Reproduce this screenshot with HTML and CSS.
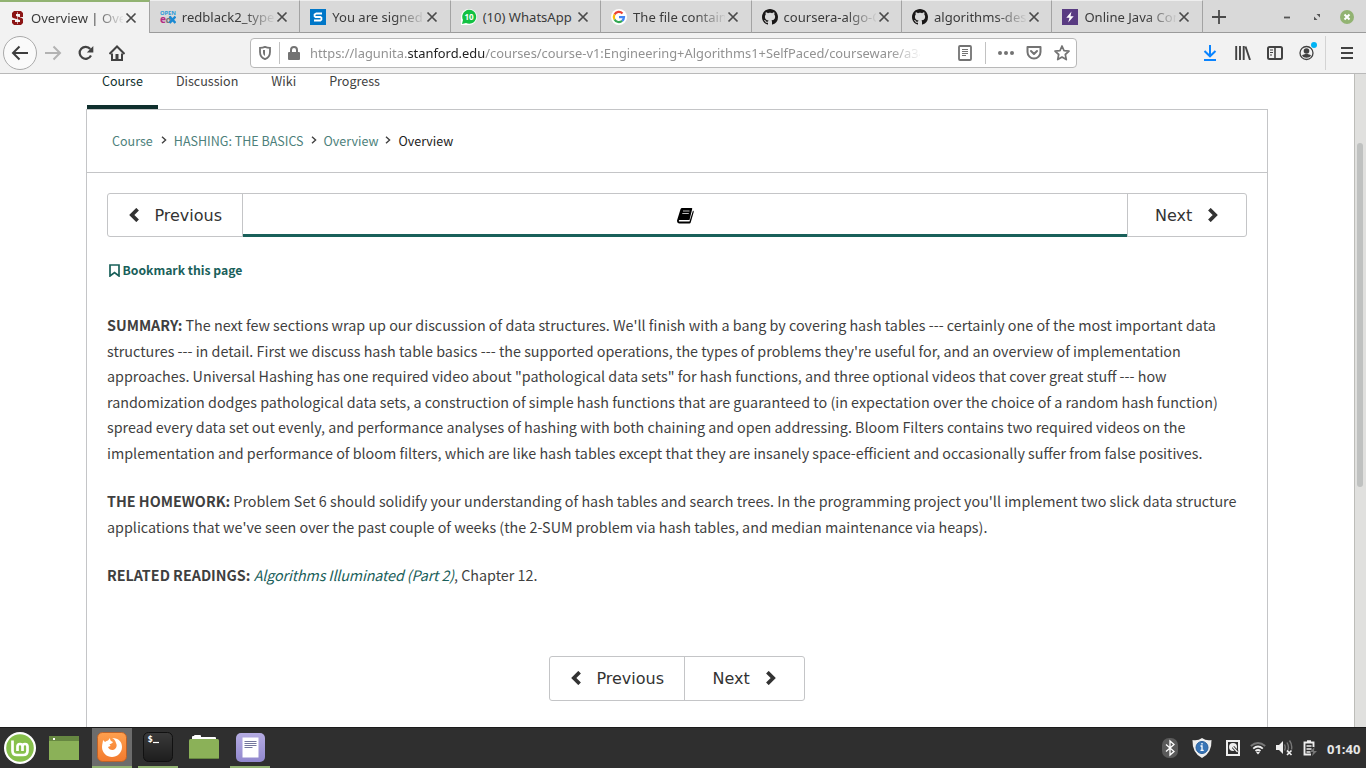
FILE: index.html
```
<!DOCTYPE html>
<html lang="en">
<head>
<meta charset="utf-8">
<title>Overview | Overview</title>
<link rel="stylesheet" href="styles.css">
</head>
<body>
<svg class="defs" width="0" height="0">
  <defs>
    <symbol id="close" viewBox="0 0 12 12"><path d="M1.5 1.5l9 9M10.5 1.5l-9 9" stroke="#4a4a4a" stroke-width="1.7" fill="none"/></symbol>
    <symbol id="github" viewBox="0 0 16 16"><path fill="#191717" d="M8 0C3.58 0 0 3.58 0 8c0 3.54 2.29 6.53 5.47 7.59.4.07.55-.17.55-.38 0-.19-.01-.82-.01-1.49-2.01.37-2.53-.49-2.69-.94-.09-.23-.48-.94-.82-1.13-.28-.15-.68-.52-.01-.53.63-.01 1.08.58 1.23.82.72 1.21 1.87.87 2.33.66.07-.52.28-.87.51-1.07-1.78-.2-3.64-.89-3.64-3.95 0-.87.31-1.59.82-2.15-.08-.2-.36-1.02.08-2.12 0 0 .67-.21 2.2.82.64-.18 1.32-.27 2-.27s1.36.09 2 .27c1.53-1.04 2.2-.82 2.2-.82.44 1.1.16 1.92.08 2.12.51.56.82 1.27.82 2.15 0 3.07-1.87 3.75-3.65 3.95.29.25.54.73.54 1.48 0 1.07-.01 1.93-.01 2.2 0 .21.15.46.55.38A8.01 8.01 0 0 0 16 8c0-4.42-3.58-8-8-8z"/></symbol>
    <symbol id="chev-left" viewBox="0 0 12 14"><path d="M9.600 1.200L3.800 7l5.800 5.800" stroke="#333" stroke-width="3.700" fill="none"/></symbol>
    <symbol id="chev-right" viewBox="0 0 12 14"><path d="M2.400 1.200L8.200 7l-5.800 5.800" stroke="#333" stroke-width="3.700" fill="none"/></symbol>
    <symbol id="crumb" viewBox="0 0 6 8"><path d="M1 .7L4.6 4 1 7.3" stroke="#414141" stroke-width="1.4" fill="none"/></symbol>
  </defs>
</svg>

<div class="screen">
  <header class="tabstrip">
    <div class="tab active">
      <svg class="fav" viewBox="0 0 16 16"><path fill="#8c1515" d="M5 1h7l2 2v4h-3V4H7v2l6 2 1 1v4l-2 2H5l-2-2v-3h3v2h5v-2L4 8 3 7V3z"/><path fill="#fff" d="M8 2h1v12H8z" opacity=".55"/></svg>
      <span class="label">Overview | Overview</span><svg class="x"><use href="#close"/></svg>
    </div>
    <div class="tab">
      <svg class="fav" viewBox="0 0 16 16"><text x="0" y="5.6" font-size="6" font-weight="bold" fill="#2e9bd8" textLength="16" lengthAdjust="spacingAndGlyphs">OPEN</text><text x="0" y="14.3" font-size="10" font-weight="bold" fill="#b52a83">e<tspan font-size="9.5" fill="#777" dx="-.6">d</tspan></text><path d="M9.500 7.500l6 6.500m0-6.500l-6 6.500" stroke="#1b8ad3" stroke-width="2.500"/></svg>
      <span class="label">redblack2_types</span><svg class="x"><use href="#close"/></svg>
    </div>
    <div class="tab">
      <svg class="fav" viewBox="0 0 16 16"><path fill="#0077c8" d="M0 0h16v16H0z"/><path d="M12 4.500H6.300L4.600 5.500v1.700l1 .8h4.800l1 .8v1.700l-1.100 1H4" stroke="#fff" stroke-width="1.800" fill="none"/></svg>
      <span class="label">You are signed in</span><svg class="x"><use href="#close"/></svg>
    </div>
    <div class="tab">
      <svg class="fav" viewBox="0 0 16 16"><path fill="#fff" d="M0 16V8a8 8 0 1 1 8 8z"/><path fill="#13c143" d="M1 15l1-4a7 7 0 1 1 3 3z"/><text x="8" y="10.800" font-size="8" font-weight="bold" fill="#fff" text-anchor="middle">10</text></svg>
      <span class="label full">(10) WhatsApp</span><svg class="x"><use href="#close"/></svg>
    </div>
    <div class="tab">
      <svg class="fav" viewBox="0 0 16 16"><circle cx="8" cy="8" r="8" fill="#fff"/><g fill="none" stroke-width="2.200"><path stroke="#ea4335" d="M3.500 5.500a5 5 0 0 1 8-1.100"/><path stroke="#fbbc05" d="M3.500 5.500a5 5 0 0 0 0 5"/><path stroke="#34a853" d="M3.500 10.500a5 5 0 0 0 7.700 1.300"/><path stroke="#4285f4" d="M11.200 11.800A5 5 0 0 0 13 8.100H8"/></g></svg>
      <span class="label">The file contains</span><svg class="x"><use href="#close"/></svg>
    </div>
    <div class="tab">
      <svg class="fav"><use href="#github"/></svg>
      <span class="label">coursera-algo-Co</span><svg class="x"><use href="#close"/></svg>
    </div>
    <div class="tab">
      <svg class="fav"><use href="#github"/></svg>
      <span class="label">algorithms-design</span><svg class="x"><use href="#close"/></svg>
    </div>
    <div class="tab">
      <svg class="fav" viewBox="0 0 16 16"><path fill="#593b82" d="M0 0h16v16H0z"/><path fill="#fff" d="M9.500 2.500L4.300 8.700h3.200L6.200 13.500l5.500-6.300H8.500z"/></svg>
      <span class="label">Online Java Comp</span><svg class="x"><use href="#close"/></svg>
    </div>
    <svg class="plus" viewBox="0 0 14 14"><path d="M7 0v14M0 7h14" stroke="#4a4a4a" stroke-width="1.800"/></svg>
    <div class="winctl">
      <svg width="8" height="8"><path d="M1 4.500h6" stroke="#555" stroke-width="1.800"/></svg>
      <svg width="8" height="8"><path d="M3.500 1H7v3.500zM1 3.500V7h3.500z" fill="#555"/></svg>
      <svg width="14" height="14"><circle cx="7" cy="7" r="7" fill="#92b372"/><path d="M4.500 4.500l5 5m0-5l-5 5" stroke="#fff" stroke-width="2"/></svg>
    </div>
  </header>

  <div class="toolbar">
    <span class="back"><svg width="18" height="16" fill="none" stroke="#3d3d3d" stroke-width="2"><path d="M17 8H2M8.500 1.500L2 8l6.500 6.500"/></svg></span>
    <svg class="fwd" width="17" height="16" fill="none" stroke="#b3b3b3" stroke-width="2"><path d="M0 8h15M8.500 1.500L15 8l-6.500 6.500"/></svg>
    <svg class="reload" width="16" height="16" fill="none"><path d="M13 10.500A6 6 0 1 1 12.300 4" stroke="#424242" stroke-width="2.200"/><path d="M15.300 1v6.500H8.800z" fill="#424242"/></svg>
    <svg class="home" width="16" height="16"><path d="M.5 9L8 1.500 15.500 9" fill="none" stroke="#424242" stroke-width="2"/><path d="M3 8.500V15h10V8.500" fill="none" stroke="#424242" stroke-width="2"/><path d="M6.500 9h3v6h-3z" fill="#424242"/></svg>
    <div class="urlbar">
      <svg class="shield" width="12" height="14" fill="none" stroke="#737373"><path d="M6 .9c2 .9 3.500 1 5 1v4c0 3.800-2 6-5 7.200C3 11.900 1 9.700 1 5.900v-4c1.500 0 3-.1 5-1z" stroke-width="1.800"/><path d="M6 4v6C4.500 9 4 8 4 6V4z" fill="#737373" stroke="none"/></svg>
      <i class="sep"></i>
      <svg class="lock" width="12" height="14"><path d="M3 7V4a3 3 0 0 1 6 0v3" fill="none" stroke="#737373" stroke-width="2"/><rect y="6" width="12" height="8" rx="1" fill="#737373"/></svg>
      <span class="url">https://lagunita.<b>stanford.edu</b>/courses/course-v1:Engineering+Algorithms1+SelfPaced/courseware/a34</span>
      <svg class="reader" width="14" height="16" fill="none" stroke="#737373"><rect x="1" y="1" width="12" height="14" rx="1" stroke-width="1.800"/><path d="M4 4.500h6M4 6.500h6M4 8.500h6M4 10.500h4"/></svg>
      <i class="sep tall"></i>
      <svg class="dots" width="16" height="4" fill="#737373"><circle cx="2" cy="2" r="2"/><circle cx="8" cy="2" r="2"/><circle cx="14" cy="2" r="2"/></svg>
      <svg class="pocket" width="16" height="14" fill="none" stroke="#737373" stroke-width="2" stroke-linecap="round" stroke-linejoin="round"><path d="M1.500 1h13v5a6.500 6.500 0 0 1-13 0z"/><path d="M5 5l3 3 3-3"/></svg>
      <svg class="star" width="16" height="16" fill="none" stroke="#737373" stroke-width="1.700" stroke-linejoin="round"><path d="M8 1l2 4.600 5 .5-3.700 3.400 1 5.100L8 12l-4.300 2.600 1-5.100L1 6.100l5-.5z"/></svg>
    </div>
    <div class="tools">
      <svg width="14" height="16" fill="none" stroke="#0a84ff" stroke-width="2"><path d="M7 0v11M1.500 6L7 11.300 12.500 6M1 15h12"/></svg>
      <svg width="16" height="14" stroke="#424242" stroke-width="1.900"><path d="M1.200 0v14M5 0v14M8.700 0v14M10.500.5L15 14"/></svg>
      <svg width="16" height="14" fill="none" stroke="#424242"><rect x="1" y="1" width="14" height="12" rx="1.500" stroke-width="2"/><path d="M8 1v12" stroke-width="1.600"/><path d="M3 4h3M3 6.500h3M3 9h2"/></svg>
      <svg width="18" height="20"><circle cx="7.500" cy="11" r="6.500" fill="none" stroke="#424242" stroke-width="1.300"/><circle cx="7.500" cy="9" r="2.800" fill="#424242"/><path d="M3 13.500c2-2 7-2 9 0-1.500 3-7.500 3-9 0z" fill="#424242"/><circle cx="15" cy="3" r="3" fill="#00b3f4"/></svg>
    </div>
    <svg class="menu" width="12" height="12" stroke="#424242" stroke-width="2"><path d="M0 1h12M0 6h12M0 11h12"/></svg>
  </div>

  <div class="viewport">
    <main>
      <nav class="coursetabs"><a class="on"><span>Course</span></a><a><span>Discussion</span></a><a><span>Wiki</span></a><a><span>Progress</span></a></nav>
      <section class="content">
        <div class="crumbs"><a>Course</a><svg><use href="#crumb"/></svg><a>HASHING: THE BASICS</a><svg><use href="#crumb"/></svg><a>Overview</a><svg><use href="#crumb"/></svg><span>Overview</span></div>
        <div class="seq">
          <div class="btn prev"><svg><use href="#chev-left"/></svg>Previous</div>
          <div class="current"><svg width="17" height="16" viewBox="0 0 17 16"><path d="M5 0h9.500q1 0 .7 1L12.500 12H2.300q-.8.500-.3 1.500h10.500L16 2.500q1 .5.700 1.500l-3 10.500q-.3 1-1.200 1H2.500Q0 15.500 0 12.500L3.500 1.200Q4 0 5 0z"/><path d="M6 3h6.500M5.300 5.500h6.500" stroke="#bbb" stroke-width="1.200"/></svg></div>
          <div class="btn next">Next<svg><use href="#chev-right"/></svg></div>
        </div>
        <div class="bookmark"><svg width="11" height="13"><path d="M1 1h9v11L5.500 8.500 1 12z" fill="none" stroke="#19605a" stroke-width="1.700"/></svg><span>Bookmark this page</span></div>
        <article>
          <p><span><b>SUMMARY:</b> The next few sections wrap up our discussion of data structures. We'll finish with a bang by covering hash tables --- certainly one of the most important data</span>
          <span>structures --- in detail. First we discuss hash table basics --- the supported operations, the types of problems they're useful for, and an overview of implementation</span>
          <span>approaches. Universal Hashing has one required video about "pathological data sets" for hash functions, and three optional videos that cover great stuff --- how</span>
          <span>randomization dodges pathological data sets, a construction of simple hash functions that are guaranteed to (in expectation over the choice of a random hash function)</span>
          <span>spread every data set out evenly, and performance analyses of hashing with both chaining and open addressing. Bloom Filters contains two required videos on the</span>
          <span>implementation and performance of bloom filters, which are like hash tables except that they are insanely space-efficient and occasionally suffer from false positives.</span></p>
          <p><span><b>THE HOMEWORK:</b> Problem Set 6 should solidify your understanding of hash tables and search trees. In the programming project you'll implement two slick data structure</span>
          <span>applications that we've seen over the past couple of weeks (the 2-SUM problem via hash tables, and median maintenance via heaps).</span></p>
          <p><span><b>RELATED READINGS:</b> <em>Algorithms Illuminated (Part 2)</em>, Chapter 12.</span></p>
        </article>
        <div class="seq bottom">
          <div class="btn prev"><svg><use href="#chev-left"/></svg>Previous</div>
          <div class="btn next">Next<svg><use href="#chev-right"/></svg></div>
        </div>
      </section>
    </main>
    <div class="scroll"><div class="thumb"></div></div>
  </div>

  <footer class="panel">
    <svg class="mint" width="32" height="32"><circle cx="16" cy="16" r="16" fill="#fff"/><circle cx="16" cy="16" r="13.800" fill="#87c04c"/><path d="M8.500 8.500v10.200q0 4.300 4.300 4.300h6.400q4.300 0 4.300-4.300v-4.200q0-2.500-2.500-2.500t-2.500 2.500v4.500M18.500 14.500q0-2.500-2.500-2.500t-2.500 2.500v4.500" fill="none" stroke="#fff" stroke-width="2.700"/></svg>
    <svg class="desk" width="30" height="24"><path fill="#8bb158" d="M0 0h30v24H0z"/><path fill="#668741" d="M0 0h30v5H0z"/><path fill="#fff" d="M4 2h2v2H4z"/></svg>
    <div class="task focus"><svg width="30" height="30"><defs><linearGradient id="fx" x2="0" y2="1"><stop stop-color="#ffa04e"/><stop offset="1" stop-color="#f37a2e"/></linearGradient></defs><rect x=".5" y=".5" width="29" height="29" rx="5" fill="url(#fx)" stroke="#bd6228"/><path fill="#fff" d="M6 8l2 2c1-1 2-1.500 3-1.500L13 6c0 2 .5 3 3 4-1 1.500-2 2-3.500 2l1 2-2.500 1c1 3 5 4 7 2 2-2 2-4 1-6-1-3-2-4-4-5 7 0 10 4 10 9 0 6-5 10-10 10S5 21 5 15c0-3 1-5 1-7z"/></svg></div>
    <div class="task run"><svg width="30" height="30"><defs><linearGradient id="tm" x2="0" y2="1"><stop stop-color="#3a3a3a"/><stop offset="1" stop-color="#1d1d1d"/></linearGradient></defs><rect x=".5" y=".5" width="29" height="29" rx="5" fill="url(#tm)" stroke="#111"/><text x="4.500" y="10" class="mono">$</text><path d="M10 10.500h6" stroke="#fff" stroke-width="1.200"/></svg></div>
    <div class="task"><svg width="30" height="26"><path fill="#fff" d="M3 6V3q0-1 1-1h1q0-1 1-1h5q1 0 1 1v1h14q1 0 1 1v2z"/><rect y="5" width="30" height="20" rx="1.500" fill="#8bb158"/><path fill="#668741" d="M1 24h28v1H1z"/></svg></div>
    <div class="task run"><svg width="29" height="29"><defs><linearGradient id="ed" x2="0" y2="1"><stop stop-color="#b5ace2"/><stop offset="1" stop-color="#9188ce"/></linearGradient></defs><rect width="29" height="29" rx="5" fill="url(#ed)"/><path fill="#fff" d="M6.500 4.500h16v20h-16z"/><path d="M8.500 8.500h12M8.500 10.500h12M8.500 12.500h12M8.500 14.500h8" stroke="#73769c" stroke-width="1"/></svg></div>
    <div class="tray">
      <svg width="16" height="20"><rect width="16" height="20" rx="7" fill="#5a5a5a"/><path d="M4 6.500l8 7L8 17V3l4 3.500-8 7" fill="none" stroke="#fff" stroke-width="1.300"/></svg>
      <svg width="20" height="20"><path fill="#eee" d="M10 0q4 3 9.500 2Q20 15 10 20 0 15 .5 2 6 3 10 0z"/><circle cx="10" cy="9.500" r="6" fill="#3875b7" stroke="#285f9c"/><path d="M8.500 8H10v4m-1.500.3h3.200M10 5v1.500" stroke="#fff" fill="none" stroke-width="1.300"/></svg>
      <svg width="14" height="16"><rect x="1" y="1" width="12" height="14" fill="none" stroke="#eee" stroke-width="2"/><circle cx="7" cy="7" r="4" fill="#eee"/><path d="M7 7l4.500 5" stroke="#2f2f2f" stroke-width="3"/><path d="M7 7l4.500 5" stroke="#eee" stroke-width="1.200"/></svg>
      <svg class="near" width="16" height="14"><g fill="none" stroke-width="1.900"><path d="M.8 5Q8-1 15.200 5" stroke="#777"/><path d="M3.200 7.600Q8 3.500 12.800 7.600M5.500 10.100Q8 8 10.500 10.100" stroke="#eee"/></g><path fill="#eee" d="M6 11.300q2-1.300 4 0L8 13.500z"/></svg>
      <svg class="near" width="17" height="16"><path fill="#eee" d="M0 5h3l4-4v13l-4-4H0z"/><path d="M8.500 4.500q1.500 3 0 6M11 2.500q3 5 0 10M13.500.5q3 4 2 9" fill="none" stroke="#777" stroke-width="1.400"/><path d="M11 10.500l4.500 4.500m0-4.500L11 15" stroke="#eee" stroke-width="1.700"/></svg>
      <svg class="near" width="14" height="16"><path d="M8 14.500H1.500v-12h9V7M4 1.200h4" fill="none" stroke="#eee" stroke-width="1.900"/><path d="M3.500 6h5M3.500 9h5M3.500 12h4" stroke="#eee" stroke-width="1.500"/><path fill="#777" d="M11.500 7L7 12h3l-1 4 5-5h-3z"/></svg>
      <time>01:40</time>
    </div>
  </footer>
</div>
</body>
</html>
```

FILE: styles.css
```
* { box-sizing: border-box; }
body { margin: 0; font-family: "Noto Sans", sans-serif; }
svg { display: block; flex: none; }
.defs { position: absolute; }
.screen { width: 1366px; height: 768px; display: flex; flex-direction: column; overflow: hidden; background: #fff; }

.tabstrip { height: 33px; flex: none; display: flex; align-items: center; background: linear-gradient(#9b9b9b, #9b9b9b) bottom / 100% 1px no-repeat #d9d9d9; }
.tab { width: 150.450px; height: 33px; flex: none; display: flex; align-items: center; padding: 0 12px 0 10px; border-right: 1px solid #a3a3a3; border-bottom: 1px solid #9b9b9b; border-top: 1px solid #eee; }
.tab.active { width: 149.800px; background: #f2f2f2; border-top: 2px solid #92b372; border-bottom: 0; padding: 0 12px 0 9px; }
.fav { width: 16px; height: 16px; margin-right: 6px; }
.label { width: 92px; margin-right: 2px; flex: none; overflow: hidden; white-space: nowrap; font-size: 13.070px; line-height: 20px; color: #3b3b3b; -webkit-mask-image: linear-gradient(to right, #000 62px, transparent 94px); mask-image: linear-gradient(to right, #000 62px, transparent 94px); }
.label.full { -webkit-mask-image: none; mask-image: none; }
.x { width: 12px; height: 12px; }
.plus { width: 14px; height: 14px; margin-left: 9px; }
.winctl { margin-left: auto; display: flex; align-items: center; gap: 22px; padding-right: 12px; }
.winctl svg:last-child { margin-left: -3px; }

.toolbar { height: 41px; flex: none; display: flex; align-items: center; background: #f2f2f2; border-bottom: 1px solid #b9b9b9; padding-left: 3px; }
.back { width: 34px; height: 34px; border: 1px solid #aaa; border-radius: 50%; background: #fafafa; display: flex; align-items: center; justify-content: center; }
.fwd { margin-left: 8px; }
.reload { margin-left: 16px; }
.home { margin-left: 15px; }
.urlbar { width: 827px; height: 30px; margin-left: 125px; background: #fff; border: 1px solid #b8b8b8; border-radius: 4px; display: flex; align-items: center; padding-left: 8px; }
.sep { width: 1px; height: 22px; background: #c2c2c2; margin: 0 8px 0 8px; }
.url { width: 610px; margin-left: 10px; overflow: hidden; white-space: nowrap; font-size: 12.880px; line-height: 22px; color: #929292; -webkit-mask-image: linear-gradient(to right, #000 580px, transparent 612px); mask-image: linear-gradient(to right, #000 580px, transparent 612px); }
.url b { font-weight: 400; color: #222; }
.reader { margin-left: 38px; }
.tall { margin-left: 13px; margin-right: 12px; }
.pocket { margin-left: 12px; }
.star { margin-left: 12px; }
.tools { display: flex; align-items: center; gap: 16px; margin-left: 126px; padding-right: 8px; height: 34px; border-right: 1px solid #d3d3d3; }
.tools svg:nth-child(2) { margin-left: 1.500px; }
.tools svg:last-child { margin-top: -3px; }
.menu { margin-left: 15px; }

.viewport { flex: 1; min-height: 0; display: flex; justify-content: space-between; overflow: hidden; font-family: "Noto Sans CJK SC", sans-serif; }
main { width: 1182px; margin-left: 86px; }
.coursetabs { display: flex; height: 35px; padding-left: 1px; font-size: 12.550px; line-height: 18px; color: #414141; }
.coursetabs a { padding: 0 15px; margin-right: 3px; height: 35px; white-space: nowrap; }
.coursetabs a span { display: block; margin-top: -2px; }
.coursetabs .on { border-bottom: 4px solid #0f2f2d; color: #0f2f2d; }
.content { height: 700px; border: 1px solid #c4c5c7; padding: 0 20px; }
.crumbs { height: 63px; margin: 0 -20px; padding: 0 25px 2px; display: flex; align-items: center; border-bottom: 1px solid #c4c5c7; font-size: 12.520px; white-space: nowrap; color: #222; }
.crumbs a { color: #4d7f7b; }
.crumbs svg { width: 6px; height: 8px; margin: 0 7px; }
.crumbs svg:nth-of-type(1) { margin-left: 8px; }
.seq { display: flex; height: 44px; margin-top: 20px; border: 1px solid #c4c5c7; border-radius: 3px; font: 16px "DejaVu Sans", sans-serif; color: #333; }
.btn { display: flex; align-items: center; }
.btn svg { width: 12px; height: 14px; }
.prev { width: 135px; padding-left: 20px; border-right: 1px solid #c4c5c7; }
.prev svg { margin-right: 14.400px; }
.next { width: 119px; border-left: 1px solid #c4c5c7; padding-left: 27px; }
.next svg { margin-left: 15px; }
.current { flex: 1; margin-bottom: -1px; border-bottom: 3px solid #19605a; display: flex; justify-content: center; align-items: center; padding-top: 3px; }
.bookmark { display: flex; align-items: center; height: 20px; margin: 23px 0 0 2px; font-size: 12.200px; font-weight: 700; color: #19605a; }
.bookmark span { margin-left: 2.500px; }
article { padding-top: 32px; font-size: 14.336px; line-height: 25.600px; color: #3f3f3f; }
p { margin: 0 0 22.700px; }
p > span { display: block; white-space: nowrap; }
em { color: #19605a; letter-spacing: -.135px; }
.bottom { width: 256px; height: 45px; margin: 68px auto 0; }
.bottom .prev { border-right: 0; }
.bottom .next { width: 120px; }
.scroll { width: 12px; border-left: 1px solid #bdbdb9; background: #e0e0de; padding: 69px 0 0 2px; }
.thumb { width: 6px; height: 344px; border-radius: 3px; background: #bfc1c0; }

.panel { height: 41px; flex: none; background: #2f2f2f; border-top: 1px solid #1b1b1b; display: flex; align-items: center; padding-left: 4px; }
.desk { margin: 0 13px; }
.task { width: 40px; height: 40px; margin-right: 6px; display: flex; align-items: center; justify-content: center; border-bottom: 2px solid transparent; }
.focus { background: #6c6c6c; border-color: #92b372; }
.run { border-color: #92b372; }
.mono { font: bold 9px "DejaVu Sans Mono", monospace; fill: #fff; }
.tray { margin-left: auto; display: flex; align-items: center; gap: 14px; padding-right: 5px; }
.tray .near { margin-left: -4px; }
.tray time { width: 34px; font-size: 13px; font-weight: 700; color: #e6e6e6; padding-top: 2px; margin-left: -4px; }
```
